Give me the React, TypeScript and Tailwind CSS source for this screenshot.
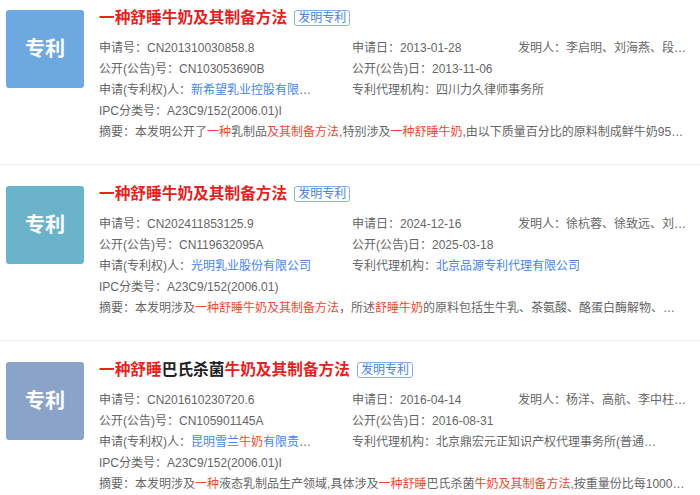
import React from "react";

type Seg = { t: string; hl?: boolean };

type Patent = {
  logo: string;
  title: Seg[];
  appNo: string;
  appDate: string;
  inventors: string;
  pubNo: string;
  pubDate: string;
  applicant: Seg[];
  applicantLink: boolean;
  agency: string;
  agencyLink: boolean;
  ipc: string;
  summary: Seg[];
};

const patents: Patent[] = [
  {
    logo: "bg-[#6ea8e0]",
    title: [{ t: "一种舒睡牛奶及其制备方法", hl: true }],
    appNo: "CN201310030858.8",
    appDate: "2013-01-28",
    inventors: "李启明、刘海燕、段勇、王红",
    pubNo: "CN103053690B",
    pubDate: "2013-11-06",
    applicant: [{ t: "新希望乳业控股有限公司" }],
    applicantLink: true,
    agency: "四川力久律师事务所",
    agencyLink: false,
    ipc: "A23C9/152(2006.01)I",
    summary: [
      { t: "本发明公开了" },
      { t: "一种", hl: true },
      { t: "乳制品" },
      { t: "及其制备方法", hl: true },
      { t: ",特别涉及" },
      { t: "一种舒睡牛奶", hl: true },
      { t: ",由以下质量百分比的原料制成鲜牛奶95%～99%" },
    ],
  },
  {
    logo: "bg-[#6ab3cb]",
    title: [{ t: "一种舒睡牛奶及其制备方法", hl: true }],
    appNo: "CN202411853125.9",
    appDate: "2024-12-16",
    inventors: "徐杭蓉、徐致远、刘振民",
    pubNo: "CN119632095A",
    pubDate: "2025-03-18",
    applicant: [{ t: "光明乳业股份有限公司" }],
    applicantLink: true,
    agency: "北京品源专利代理有限公司",
    agencyLink: true,
    ipc: "A23C9/152(2006.01)",
    summary: [
      { t: "本发明涉及" },
      { t: "一种舒睡牛奶及其制备方法", hl: true },
      { t: "，所述" },
      { t: "舒睡牛奶", hl: true },
      { t: "的原料包括生牛乳、茶氨酸、酪蛋白酶解物、酸枣仁提取物和益生元" },
    ],
  },
  {
    logo: "bg-[#8ba2c9]",
    title: [
      { t: "一种舒睡", hl: true },
      { t: "巴氏杀菌" },
      { t: "牛奶及其制备方法", hl: true },
    ],
    appNo: "CN201610230720.6",
    appDate: "2016-04-14",
    inventors: "杨洋、高航、李中柱、张冬",
    pubNo: "CN105901145A",
    pubDate: "2016-08-31",
    applicant: [{ t: "昆明雪兰" }, { t: "牛奶", hl: true }, { t: "有限责任公司" }],
    applicantLink: true,
    agency: "北京鼎宏元正知识产权代理事务所(普通合伙)",
    agencyLink: false,
    ipc: "A23C9/152(2006.01)I",
    summary: [
      { t: "本发明涉及" },
      { t: "一种", hl: true },
      { t: "液态乳制品生产领域,具体涉及" },
      { t: "一种舒睡", hl: true },
      { t: "巴氏杀菌" },
      { t: "牛奶及其制备方法", hl: true },
      { t: ",按重量份比每1000份鲜牛奶中添加" },
    ],
  },
];

function Segs({ segs, hlClass, baseClass }: { segs: Seg[]; hlClass: string; baseClass?: string }) {
  return (
    <>
      {segs.map((s, i) => (
        <span key={i} className={s.hl ? hlClass : baseClass}>
          {s.t}
        </span>
      ))}
    </>
  );
}

function PatentCard({ p }: { p: Patent }) {
  return (
    <div className="flex border-t border-[#f1f1f1] pl-[6px] pt-[17px] pb-[21px]">
      <div
        className={`mt-[4px] flex h-[78px] w-[78px] shrink-0 items-center justify-center rounded-[3px] ${p.logo}`}
      >
        <span className="text-[20px] font-bold text-white">专利</span>
      </div>
      <div className="ml-[15px] min-w-0 flex-1">
        <div className="flex h-[24px] items-center">
          <span className="text-[15.7px] font-bold leading-[24px] text-[#222]">
            <Segs segs={p.title} hlClass="text-[#e8211f]" />
          </span>
          <span className="ml-[7px] rounded-[3px] border border-[#84acf0] px-[3px] text-[12px] leading-[14px] text-[#4a80e6]">
            发明专利
          </span>
        </div>
        <div className="mt-[8px] text-[12px] leading-[21px] text-[#666]">
          <div className="flex">
            <div className="w-[253px] shrink-0">申请号：{p.appNo}</div>
            <div className="w-[166px] shrink-0">申请日：{p.appDate}</div>
            <div className="w-[173px] truncate">发明人：{p.inventors}</div>
          </div>
          <div className="flex">
            <div className="w-[253px] shrink-0">公开(公告)号：{p.pubNo}</div>
            <div className="w-[166px] shrink-0">公开(公告)日：{p.pubDate}</div>
          </div>
          <div className="flex">
            <div className="w-[253px] shrink-0">
              <div className="w-[222px] truncate">
                申请(专利权)人：
                <span className={p.applicantLink ? "text-[#4585ee]" : ""}>
                  <Segs segs={p.applicant} hlClass="text-[#f4482b]" />
                </span>
              </div>
            </div>
            <div className="w-[310px] truncate">
              专利代理机构：
              <span className={p.agencyLink ? "text-[#4585ee]" : ""}>{p.agency}</span>
            </div>
          </div>
          <div>IPC分类号：{p.ipc}</div>
          <div className="w-[586px] truncate">
            摘要：
            <Segs segs={p.summary} hlClass="text-[#f4482b]" />
          </div>
        </div>
      </div>
    </div>
  );
}

export default function App() {
  return (
    <div
      className="h-[495px] w-[700px] overflow-hidden bg-white"
      style={{ fontFamily: '"Liberation Sans", "Noto Sans CJK SC", sans-serif' }}
    >
      <div className="-mt-[12px]">
        {patents.map((p, i) => (
          <PatentCard key={i} p={p} />
        ))}
      </div>
    </div>
  );
}
